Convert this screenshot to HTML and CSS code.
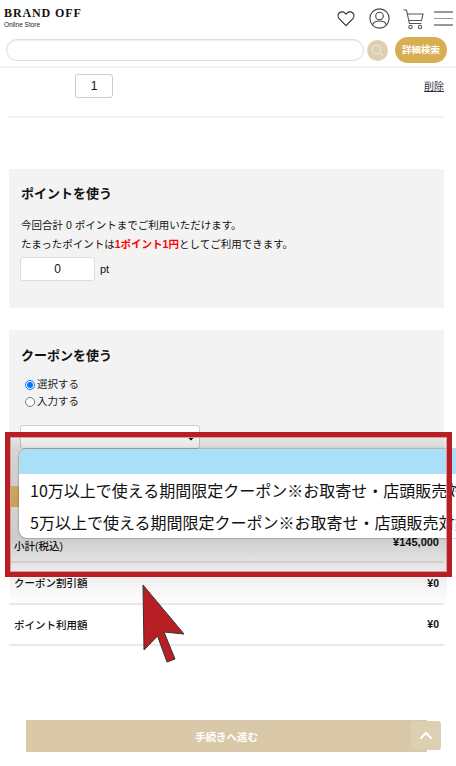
FILE: index.html

```html
<!DOCTYPE html>
<html lang="ja">
<head>
<meta charset="utf-8"/>
<meta content="width=device-width, initial-scale=1.0" name="viewport"/>
<title>BRAND OFF Online Store</title>
<link rel="stylesheet" href="styles.css">
</head>
<body>
<header class="header">
<div class="header-top">
<div class="logo">
<div class="logo-name">BRAND OFF</div>
<div class="logo-sub">Online Store</div>
</div>
<div class="header-icons">
<svg class="icon-heart" width="18" height="17" viewBox="0 0 18 17"><path d="M9 15.6 2.3 8.9C.6 7.1.7 4.5 2.2 3 3.8 1.500 6.500 1.500 8 3.100L9 4.100 10 3.100C11.500 1.500 14.200 1.500 15.800 3 17.300 4.500 17.400 7.100 15.700 8.900Z" fill="none" stroke="#333" stroke-width="1.200"/></svg>
<svg class="icon-user" width="21" height="21" viewBox="0 0 21 21"><circle cx="10.500" cy="10.500" r="9.600" fill="none" stroke="#444" stroke-width="1.100"/><circle cx="10.500" cy="8" r="3.800" fill="none" stroke="#444" stroke-width="1.100"/><path d="M3.600 16.800C4.500 14 7 13 10.500 13S16.500 14 17.400 16.800" fill="none" stroke="#444" stroke-width="1.100"/></svg>
<svg class="icon-cart" width="21" height="21" viewBox="0 0 21 21"><path d="M.5 1H3.500L6.400 14.500H18.500M4.500 5H20L18.500 11.500H5.800" fill="none" stroke="#555" stroke-width="1.100"/><circle cx="7.500" cy="18" r="1.700" fill="none" stroke="#555" stroke-width="1.100"/><circle cx="17" cy="18" r="1.700" fill="none" stroke="#555" stroke-width="1.100"/></svg>
<div class="burger"><span></span><span></span><span></span></div>
</div>
</div>
<div class="search-row">
<input class="search-input" type="text"/>
<div class="search-btn">
<svg width="13" height="13" viewBox="0 0 13 13"><circle cx="5.500" cy="5.500" r="4.400" fill="none" stroke="#f3eee0" stroke-width="1"/><path d="M8.800 8.800 12.300 12.300" stroke="#f3eee0" stroke-width="1"/></svg>
</div>
<div class="detail-btn">詳細検索</div>
</div>
</header>

<main class="main">
<div class="item-row">
<input class="qty" type="text" value="1"/>
<a class="delete" href="#">削除</a>
</div>

<section class="panel point-panel">
<h2>ポイントを使う</h2>
<p>今回合計 0 ポイントまでご利用いただけます。</p>
<p>たまったポイントは<strong class="red">1ポイント1円</strong>としてご利用できます。</p>
<div class="point-input">
<input class="point-box" type="text" value="0"/>
<span>pt</span>
</div>
</section>

<section class="panel coupon-panel">
<h2>クーポンを使う</h2>
<label class="radio"><input type="radio" name="coupon" checked/>選択する</label>
<label class="radio"><input type="radio" name="coupon"/>入力する</label>
<select class="coupon-select"><option></option></select>
</section>

<div class="gold-band"></div>

<div class="summary">
<div class="sum-row"><span>小計(税込)</span><b>¥145,000</b></div>
<div class="sum-row"><span>クーポン割引額</span><b>¥0</b></div>
<div class="sum-row"><span>ポイント利用額</span><b>¥0</b></div>
</div>
</main>

<div class="proceed">手続きへ進む</div>
<div class="page-top">
<svg width="14" height="9" viewBox="0 0 14 9"><path d="M1.500 7.500 7 2 12.500 7.500" fill="none" stroke="#fff" stroke-width="2.200"/></svg>
</div>

<div class="shade"></div>
<div class="dropdown">
<div class="dropdown-head"></div>
<div class="dropdown-opt">10万以上で使える期間限定クーポン※お取寄せ・店頭販売対象外</div>
<div class="dropdown-opt shift">5万以上で使える期間限定クーポン※お取寄せ・店頭販売対象外</div>
</div>
<div class="red-frame"></div>
<svg class="arrow" width="46" height="80" viewBox="0 0 46 80"><path d="M2 1 43 50 23 48 34 75 26 78 16.500 52 3 66Z" fill="#b81f25" stroke="#333" stroke-width="1"/></svg>
</body>
</html>
```

FILE: styles.css

```css
* {
    box-sizing: border-box;
}
html, body {
    height: 766px;
    overflow: hidden;
}
body {
    font-family: "Liberation Sans", "Noto Sans CJK JP", sans-serif;
    background: #fff;
    color: #111;
    margin: 0;
    position: relative;
    font-size: 10px;
}
.header {
    height: 68px;
    border-bottom: 2px solid #f3f3f3;
    padding: 0 3px 0 6px;
}
.header-top {
    height: 37px;
    display: flex;
    justify-content: space-between;
    padding-top: 8px;
}
.logo {
    margin-left: -2px;
}
.logo-name {
    font-family: "Liberation Serif", serif;
    font-weight: 700;
    font-size: 12px;
    line-height: 10px;
    letter-spacing: .9px;
    color: #111;
}
.logo-sub {
    font-size: 6.500px;
    line-height: 8px;
    margin-top: 3px;
    color: #222;
}
.header-icons {
    display: flex;
    align-items: flex-start;
}
.icon-heart {
    margin: 2px 14px 0 0;
}
.icon-user {
    margin: 0 13px 0 0;
}
.icon-cart {
    margin: 1px 10px 0 0;
}
.burger {
    width: 19px;
    display: flex;
    flex-direction: column;
    gap: 5px;
    margin-top: 3px;
}
.burger span {
    display: block;
    height: 1.500px;
    background: #999;
}
.search-row {
    display: flex;
    align-items: center;
    height: 26px;
}
.search-input {
    width: 358px;
    height: 22px;
    border: 1px solid #ddd;
    border-radius: 11px;
    box-shadow: inset 0 1px 1px #eee;
    background: #fff;
}
.search-btn {
    width: 21px;
    height: 21px;
    margin-left: 3px;
    border-radius: 50%;
    background: #ddd0b0;
    display: flex;
    align-items: center;
    justify-content: center;
}
.detail-btn {
    width: 52px;
    height: 26px;
    margin-left: 7px;
    border-radius: 13px;
    background: #d9ad52;
    color: #fff;
    font-size: 9.500px;
    font-weight: 700;
    line-height: 26px;
    text-align: center;
}
.main {
    padding: 0 12px 0 9px;
}
.item-row {
    height: 50px;
    border-bottom: 2px solid #f1f1f1;
    display: flex;
    justify-content: space-between;
    padding-top: 6px;
    padding-left: 66px;
}
.qty {
    width: 38px;
    height: 24px;
    border: 1px solid #ccc;
    border-radius: 3px;
    text-align: center;
    font-size: 12px;
    font-family: inherit;
    color: #111;
}
.delete {
    font-size: 10px;
    color: #334;
    margin-top: 4px;
}
.panel {
    background: #f3f3f3;
    padding: 0 12px;
}
.panel h2 {
    margin: 0;
    font-size: 13px;
    font-weight: 700;
}
.panel p {
    margin: 0;
    font-size: 10.500px;
    line-height: 18.500px;
}
.red {
    color: #f00;
}
.point-panel {
    height: 139px;
    margin-top: 51px;
    padding-top: 14px;
}
.point-panel h2 {
    margin-bottom: 14px;
}
.point-input {
    display: flex;
    align-items: center;
    gap: 5px;
    margin-top: 4px;
    margin-left: -1px;
    font-size: 11px;
}
.point-box {
    width: 75px;
    height: 24px;
    border: 1px solid #ddd;
    border-radius: 3px;
    text-align: center;
    font-size: 12px;
    font-family: inherit;
    color: #111;
}
.coupon-panel {
    height: 156px;
    margin-top: 22px;
    padding-top: 15px;
}
.coupon-panel h2 {
    margin-bottom: 12px;
}
.radio {
    display: flex;
    align-items: center;
    font-size: 10.500px;
    line-height: 17px;
    padding-left: 4px;
    color: #222;
}
.radio input {
    margin: 1px 2px 0 0;
    width: 10px;
    height: 10px;
}
.coupon-select {
    display: block;
    width: 180px;
    height: 24px;
    margin: 15px 0 0 -1px;
    border: 1px solid #ccc;
    border-radius: 3px;
    background-color: #fff;
}
.gold-band {
    height: 21px;
    background: #f0c56c;
}
.summary {
    margin-top: 18px;
}
.sum-row {
    height: 41.500px;
    border-bottom: 2px solid #e9e9e9;
    display: flex;
    justify-content: space-between;
    align-items: center;
    padding: 0 5px;
    font-size: 10.500px;
    font-weight: 500;
}
.sum-row:first-child {
    height: 38px;
    padding-top: 4px;
}
.sum-row b {
    font-size: 10.500px;
}
.sum-row:first-child b {
    font-size: 11px;
    margin-top: -7px;
}
.proceed {
    position: absolute;
    left: 26px;
    top: 720px;
    width: 401px;
    height: 32px;
    background: #d9c9a8;
    color: #fff;
    font-size: 10.500px;
    font-weight: 700;
    line-height: 34px;
    text-align: center;
}
.page-top {
    position: absolute;
    left: 411px;
    top: 721px;
    width: 30px;
    height: 29px;
    border-radius: 3px;
    background: #ddd0b2;
    display: flex;
    align-items: center;
    justify-content: center;
}
.shade {
    position: absolute;
    left: 10px;
    top: 432px;
    width: 437px;
    height: 173px;
    background: linear-gradient(rgba(0, 0, 0, .02), rgba(0, 0, 0, .12) 10%, rgba(0, 0, 0, .2) 61%, rgba(0, 0, 0, .08) 80%, rgba(0, 0, 0, 0));
}
.dropdown {
    position: absolute;
    left: 19px;
    top: 449px;
    width: 470px;
    height: 89px;
    border-radius: 8px;
    background: #fff;
    overflow: hidden;
    box-shadow: 0 0 2px rgba(0, 0, 0, .6);
}
.dropdown-head {
    height: 25px;
    background: #aae0f7;
}
.dropdown-opt {
    height: 32px;
    font-size: 16px;
    line-height: 32px;
    padding-left: 11px;
    white-space: nowrap;
    color: #111;
    font-family: "Noto Sans CJK JP", sans-serif;
}
.red-frame {
    position: absolute;
    left: 5px;
    top: 432px;
    width: 447px;
    height: 145px;
    border: 5px solid #b81f25;
    box-shadow: inset 0 0 0 1px #dd9a9c;
}
.arrow {
    position: absolute;
    left: 141px;
    top: 584px;
}
```
